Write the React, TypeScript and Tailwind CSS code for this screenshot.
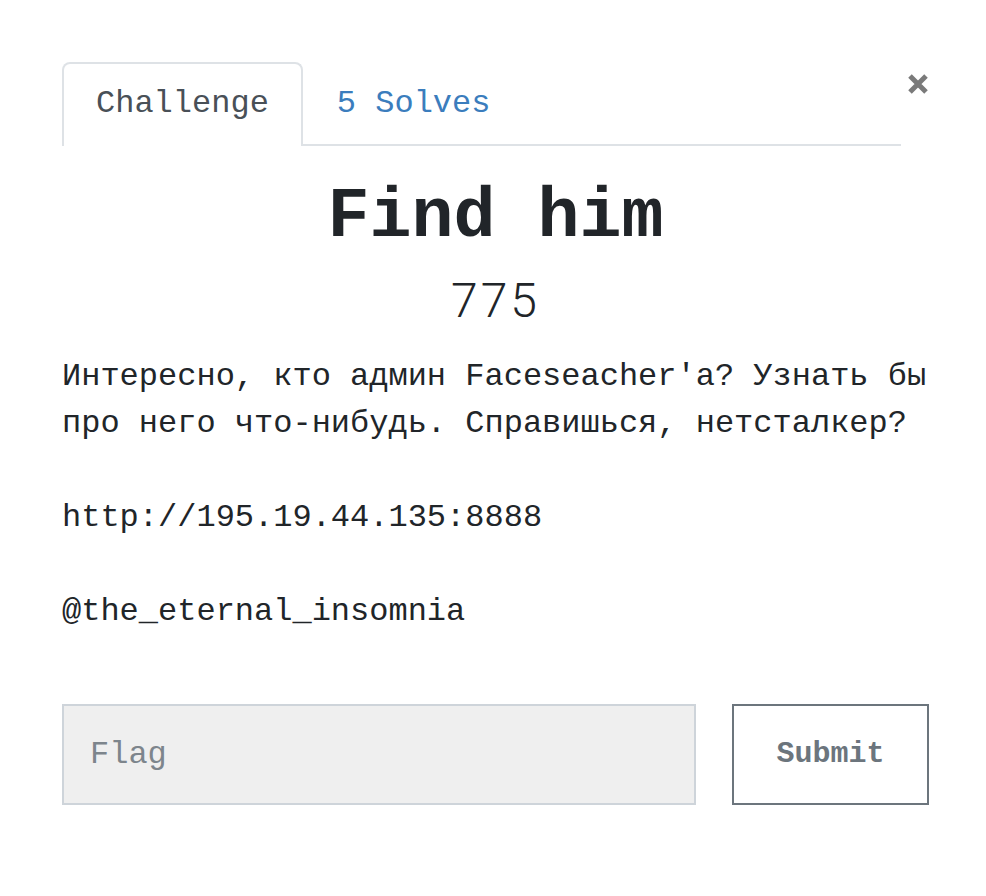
import React from "react";

export default function App() {
  const mono = { fontFamily: '"Courier New", "Liberation Mono", monospace' };
  return (
    <div className="min-h-[896px] w-[986px] bg-white" style={mono}>
      <div className="pl-[62px] pr-[57px] pt-[62px]">
        <div className="flex items-start">
          <div className="flex flex-1 border-b-2 border-[#dee2e6]">
            <div className="-mb-[2px] rounded-t-[8px] border-2 border-b-0 border-[#dee2e6] bg-white px-[32px] py-[16px] text-[32px] leading-[48px] text-[#495057]">
              Challenge
            </div>
            <div className="px-[34px] pb-[16px] pt-[18px] text-[32px] leading-[48px] text-[#3b7dbd]">
              5 Solves
            </div>
          </div>
          <div className="flex w-[28px] justify-end pt-[11px]">
            <svg width="22" height="22" viewBox="0 0 22 22">
              <path d="M3 3 L19 19 M19 3 L3 19" stroke="#7a7a7a" strokeWidth="5" strokeLinecap="butt" />
            </svg>
          </div>
        </div>

        <h1 className="mt-[30px] text-center text-[70px] font-bold leading-[84px] text-[#212529]">
          Find him
        </h1>
        <div
          className="mt-[12px] text-center text-[48px] font-light leading-[58px] tracking-[3px] text-[#212529]"
          style={{ fontFamily: 'Roboto, "Noto Sans", sans-serif' }}
        >
          775
        </div>

        <div className="mt-[23px] text-[32px] leading-[47px] text-[#212529]">
          <p>Интересно, кто админ Faceseacher'a? Узнать бы про него что-нибудь. Справишься, нетсталкер?</p>
          <p className="mt-[47px]">http://195.19.44.135:8888</p>
          <p className="mt-[47px]">@the_eternal_insomnia</p>
        </div>

        <div className="mt-[69px] flex gap-[36px]">
          <div className="flex h-[101px] flex-1 items-center border-2 border-[#ced4da] bg-[#efefef] px-[26px] text-[32px] text-[#7d858c]">
            Flag
          </div>
          <div className="flex h-[101px] w-[197px] items-center justify-center border-2 border-[#6c757d] bg-white text-[30px] font-bold text-[#6c757d]">
            Submit
          </div>
        </div>
      </div>
    </div>
  );
}
